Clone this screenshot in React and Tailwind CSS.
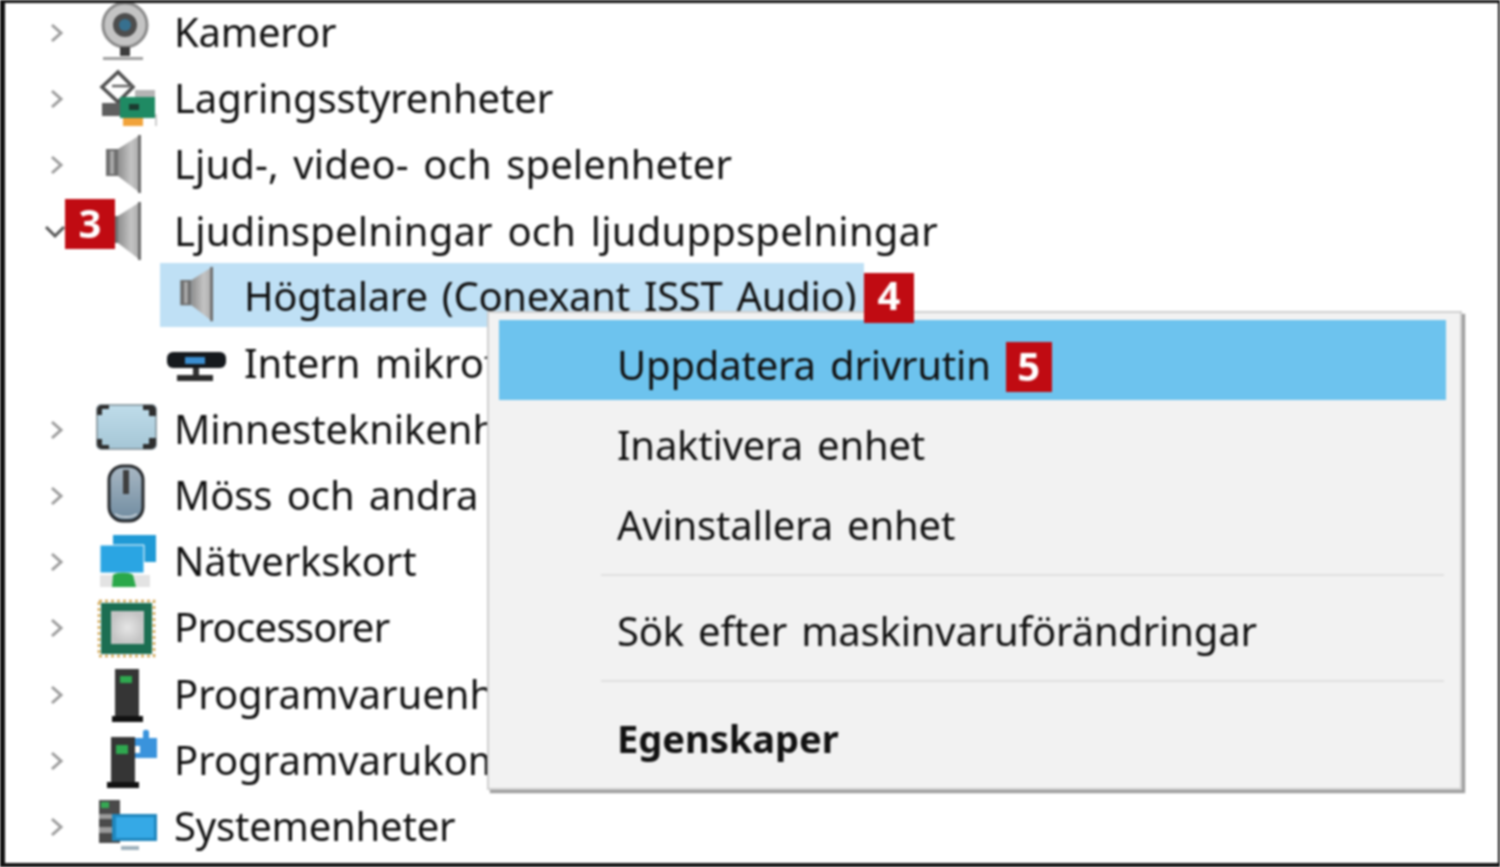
const Chevron = () => (
  <svg width="16" height="24" viewBox="0 0 16 24" className="shrink-0">
    <path d="M3 4l9 8-9 8" fill="none" stroke="#9c9c9c" strokeWidth="3" />
  </svg>
);

const ChevronDown = () => (
  <svg width="20" height="16" viewBox="0 0 20 16" className="shrink-0">
    <path d="M1 3l9 9 9-9" fill="none" stroke="#555" strokeWidth="3" />
  </svg>
);

const Speaker = ({ w = 62, h = 66 }) => (
  <svg width={w} height={h} viewBox="0 0 62 66" className="shrink-0">
    <path d="M11 17h12v27H11z" fill="#6f6f6f" />
    <path d="M15 19h4v23h-4z" fill="#a8a8a8" />
    <path d="M23 17L45 3v58L23 44z" fill="url(#cone)" />
    <path d="M43 3h3v58h-3z" fill="#6e6e6e" />
  </svg>
);

const Camera = () => (
  <svg width="62" height="66" viewBox="0 0 62 66" className="shrink-0">
    <circle cx="30" cy="25" r="22" fill="#c4c4c4" />
    <circle cx="30" cy="25" r="22" fill="none" stroke="#8a8a8a" strokeWidth="3" />
    <circle cx="30" cy="25" r="12" fill="#4d4d4d" />
    <circle cx="30" cy="25" r="6" fill="#37708f" />
    <path d="M25 47h10v9H25z" fill="#3d3d3d" />
    <path d="M8 57h40v3H8z" fill="#a0a0a0" />
  </svg>
);

const Storage = () => (
  <svg width="62" height="66" viewBox="0 0 62 66" className="shrink-0">
    <path d="M23 6L7 21l16 15 15-15z" fill="#fff" stroke="#4f4f4f" strokeWidth="3.5" />
    <path d="M17 20h20" stroke="#666" strokeWidth="2.5" />
    <path d="M7 37h22v13H7z" fill="#5f5f5f" />
    <path d="M40 24h20v26H40z" fill="#b4b4b4" />
    <path d="M25 31h35v21H25z" fill="#1f8a63" />
    <path d="M34 38h10v6H34z" fill="#1c3b30" />
    <path d="M28 52h20v8H28z" fill="#f1a33b" />
    <path d="M60 48h2v12h-2z" fill="#ccc" />
  </svg>
);

const Mic = () => (
  <svg width="62" height="66" viewBox="0 0 62 66" className="shrink-0">
    <rect x="2" y="21" width="59" height="16" rx="6" fill="#15191d" />
    <path d="M20 26h20v7H20z" fill="#3b8ed0" />
    <path d="M28 37h6v8h-6z" fill="#333" />
    <path d="M12 44h36v6H12z" fill="#2b2b2b" />
  </svg>
);

const Memory = () => (
  <svg width="62" height="66" viewBox="0 0 62 66" className="shrink-0">
    <rect x="2" y="8" width="59" height="44" rx="4" fill="url(#card)" stroke="#7b8a93" strokeWidth="1.5" />
    <path d="M2 13a5 5 0 0 1 5-5h7v4H7v6H2zM61 13a5 5 0 0 0-5-5h-8v5h6v6h7zM2 47a5 5 0 0 0 5 5h7v-4H7v-6H2zM61 47a5 5 0 0 1-5 5h-8v-5h6v-6h7z" fill="#2e2e2e" />
  </svg>
);

const Mouse = () => (
  <svg width="62" height="66" viewBox="0 0 62 66" className="shrink-0">
    <rect x="14" y="3" width="34" height="55" rx="14" fill="url(#mouse)" stroke="#26292c" strokeWidth="3" />
    <path d="M28 7h6v24h-6z" fill="#3f3f3f" />
    <path d="M20 51c6 4 16 4 22 0" fill="none" stroke="#c8d0d6" strokeWidth="2" />
  </svg>
);

const Network = () => (
  <svg width="62" height="66" viewBox="0 0 62 66" className="shrink-0">
    <path d="M18 6h43v27H18z" fill="#1f9ad6" />
    <path d="M5 16h44v28H5z" fill="#2aa5e3" stroke="#fff" strokeWidth="1" />
    <path d="M5 46h50v12H5z" fill="#e3e3e3" />
    <path d="M18 46c2-3 18-3 20 0l3 12H17z" fill="#2aa84a" />
  </svg>
);

const Cpu = () => (
  <svg width="62" height="66" viewBox="0 0 62 66" className="shrink-0">
    <path d="M4 6h55v55H4z" fill="none" stroke="#d1a550" strokeWidth="2.5" strokeDasharray="3 3" />
    <path d="M6 8h51v51H6z" fill="#1c6e52" />
    <path d="M16 16h33v33H16z" fill="url(#die)" />
  </svg>
);

const Tower = () => (
  <svg width="62" height="66" viewBox="0 0 62 66" className="shrink-0">
    <path d="M20 7h24v49H20z" fill="#353535" />
    <path d="M25 14h12v7H25z" fill="#2fa84f" />
    <path d="M17 54h31v6H17z" fill="#111" />
  </svg>
);

const TowerPuzzle = () => (
  <svg width="62" height="66" viewBox="0 0 62 66" className="shrink-0">
    <path d="M16 9h24v47H16z" fill="#353535" />
    <path d="M21 17h12v9H21z" fill="#2fa84f" />
    <path d="M12 54h32v6H12z" fill="#111" />
    <path d="M40 10h8V4c0-3 6-3 6 0v6h8v20H40v-5h5v-7h-5z" fill="#3a93dc" />
  </svg>
);

const SystemIcon = () => (
  <svg width="62" height="66" viewBox="0 0 62 66" className="shrink-0">
    <path d="M4 6h21v43H4z" fill="#4a4a4a" />
    <path d="M6 8h8v6H6z" fill="#35a853" />
    <path d="M4 20h18v5H4zM4 33h14v6H4z" fill="#9a9a9a" />
    <path d="M17 20h45v27H17z" fill="#1f86bd" />
    <path d="M21 23h38v21H21z" fill="#35a9e6" />
    <path d="M26 52h18v4H26z" fill="#9fb2bd" />
  </svg>
);

const Badge = ({ children, className }) => (
  <span
    className={`flex h-[50px] items-center justify-center bg-[#c00b12] pb-[3px] text-[40px] font-bold leading-none tracking-normal text-white ${className}`}
  >
    {children}
  </span>
);

const Row = ({ icon, label, down, text = "" }) => (
  <div className="flex h-[66.17px] items-center pl-[49px]">
    {down ? (
      <span className="-ml-[4px] mr-[-1px] flex w-[21px] items-center">
        <ChevronDown />
      </span>
    ) : (
      <Chevron />
    )}
    <span className="ml-[30px] shrink-0">{icon}</span>
    <span className={`ml-[17px] whitespace-nowrap pb-[2px] ${text}`}>{label}</span>
  </div>
);

const MenuItem = ({ children, className = "pb-[2px]" }) => (
  <div className={`flex h-[80px] items-center pl-[118px] ${className}`}>{children}</div>
);

export default function App() {
  return (
    <div className="relative h-[867px] w-[1500px] overflow-hidden bg-white font-['Noto_Sans',sans-serif] text-[40px] leading-none text-[#111] [word-spacing:4px] blur-[0.8px]">
      <svg width="0" height="0" className="absolute">
        <defs>
          <linearGradient id="cone" x1="0" x2="1" y1="0" y2="0">
            <stop offset="0" stopColor="#8e8e8e" />
            <stop offset="0.6" stopColor="#c4c4c4" />
            <stop offset="1" stopColor="#a8a8a8" />
          </linearGradient>
          <linearGradient id="card" x1="0" x2="0" y1="0" y2="1">
            <stop offset="0" stopColor="#bfdcea" />
            <stop offset="1" stopColor="#a5c6d6" />
          </linearGradient>
          <linearGradient id="mouse" x1="0" x2="0" y1="0" y2="1">
            <stop offset="0" stopColor="#a9b8c4" />
            <stop offset="1" stopColor="#6f8ba0" />
          </linearGradient>
          <radialGradient id="die">
            <stop offset="0" stopColor="#e6e6e6" />
            <stop offset="1" stopColor="#c4c4c4" />
          </radialGradient>
        </defs>
      </svg>

      <Row icon={<Camera />} label="Kameror" text="tracking-[-0.2px]" />
      <Row icon={<Storage />} label="Lagringsstyrenheter" text="tracking-[-0.1px]" />
      <Row icon={<Speaker />} label="Ljud-, video- och spelenheter" text="tracking-[0.1px]" />
      <Row icon={<Speaker />} label="Ljudinspelningar och ljuduppspelningar" down text="tracking-[0.2px]" />

      <div className="flex h-[66.17px] items-center pl-[160px]">
        <div className="-mt-[5px] flex h-[64px] w-[704px] items-center bg-[#bfe0f5]">
          <span className="ml-[10px] shrink-0">
            <Speaker w={58} h={62} />
          </span>
          <span className="ml-[16px] mt-[2px] whitespace-nowrap tracking-[-0.3px]">Högtalare (Conexant ISST Audio)</span>
        </div>
        <Badge className="relative z-10 w-[50px] pb-[6px]">4</Badge>
      </div>

      <div className="flex h-[66.17px] items-center pl-[165px]">
        <Mic />
        <span className="ml-[17px] whitespace-nowrap pb-[2px]">Intern mikrof</span>
      </div>

      <Row icon={<Memory />} label="Minnesteknikenh" text="tracking-[-0.1px]" />
      <Row icon={<Mouse />} label="Möss och andra" text="tracking-[-0.1px]" />
      <Row icon={<Network />} label="Nätverkskort" text="tracking-[-0.1px]" />
      <Row icon={<Cpu />} label="Processorer" text="tracking-[-0.7px]" />
      <Row icon={<Tower />} label="Programvaruenh" />
      <Row icon={<TowerPuzzle />} label="Programvarukom" />
      <Row icon={<SystemIcon />} label="Systemenheter" text="tracking-[-0.2px]" />

      <Badge className="absolute left-[65px] top-[199px] w-[50px]">3</Badge>

      <div className="absolute left-[487px] top-[311px] h-[479px] w-[975px] border-2 border-[#cfcfcf] bg-[#f2f2f2] pl-[10px] pr-[14px] pt-[7px] tracking-[-0.2px] shadow-[3px_3px_1px_rgba(0,0,0,0.38)]">
        <MenuItem className="mb-[6px] bg-[#6dc3ee] pt-[10px]">
          <span>Uppdatera drivrutin</span>
          <Badge className="ml-[15px] mt-[4px] w-[46px]">5</Badge>
        </MenuItem>
        <MenuItem>Inaktivera enhet</MenuItem>
        <MenuItem>Avinstallera enhet</MenuItem>
        <div className="ml-[102px] mr-[2px] mt-[8px] h-[2px] bg-[#e0e0e0]" />
        <MenuItem className="mt-[17px] pb-[4px]">Sök efter maskinvaruförändringar</MenuItem>
        <div className="ml-[102px] mr-[2px] mt-[7px] h-[2px] bg-[#e0e0e0]" />
        <MenuItem className="mt-[19px] pb-[6px] text-[38px] font-bold tracking-normal">Egenskaper</MenuItem>
      </div>

      <div className="pointer-events-none absolute inset-0 border-b-[4px] border-l-[5px] border-r-[2px] border-t-[3px] border-[#111]" />
    </div>
  );
}
